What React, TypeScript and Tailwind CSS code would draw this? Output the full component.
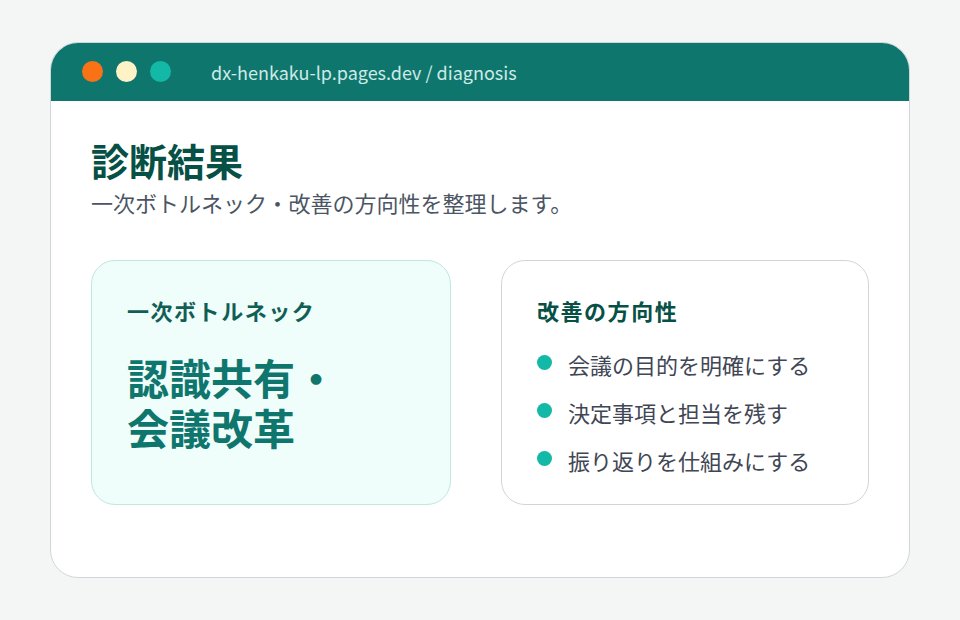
const font = { fontFamily: '"Noto Sans CJK JP", "Noto Sans", sans-serif' };

export default function App() {
  const items = ["会議の目的を明確にする", "決定事項と担当を残す", "振り返りを仕組みにする"];

  return (
    <div className="w-[960px] h-[620px] bg-[#f4f6f5] pt-[42px] px-[50px]" style={font}>
      <div className="h-[536px] rounded-[28px] border border-[#d1d5db] bg-white overflow-hidden">
        {/* ブラウザ風ヘッダー */}
        <div className="h-[59px] -mx-px -mt-px bg-[#0f766e] flex items-center pl-[32px]">
          <div className="flex items-center gap-[13px]">
            <span className="w-[21px] h-[21px] rounded-full bg-[#f97316]" />
            <span className="w-[21px] h-[21px] rounded-full bg-[#fef3c7]" />
            <span className="w-[21px] h-[21px] rounded-full bg-[#14b8a6]" />
          </div>
          <span className="ml-[40px] text-[18px] leading-[24px] text-[#cdeae5]">dx-henkaku-lp.pages.dev / diagnosis</span>
        </div>

        <div className="px-[40px] pt-[36px]">
          <h1 className="text-[38px] leading-[46px] font-bold text-[#065046]">診断結果</h1>
          <p className="mt-[4px] text-[22px] leading-[30px] text-[#4b5563]">一次ボトルネック・改善の方向性を整理します。</p>

          {/* 結果カード */}
          <div className="mt-[43px] grid grid-cols-[360px_1fr] gap-[50px]">
            <div className="h-[245px] rounded-[24px] border border-[#bde8e3] bg-[#effdfb] px-[35px] pt-[34px]">
              <div className="text-[22px] leading-[30px] font-bold tracking-[0.07em] text-[#115e55]">一次ボトルネック</div>
              <div className="mt-[27px] text-[42px] leading-[1.2] font-bold text-[#0f766e]">
                認識共有・
                <br />
                会議改革
              </div>
            </div>

            <div className="h-[245px] rounded-[24px] border border-[#d1d5db] bg-white px-[35px] pt-[34px]">
              <div className="text-[22px] leading-[30px] font-bold tracking-[0.07em] text-[#065046]">改善の方向性</div>
              <ul className="mt-[24px] flex flex-col gap-[18px]">
                {items.map((t) => (
                  <li key={t} className="flex items-start gap-[16px] text-[22px] leading-[30px] text-[#3f4654]">
                    <span className="mt-[6px] w-[15px] h-[15px] rounded-full bg-[#14b8a6] shrink-0" />
                    {t}
                  </li>
                ))}
              </ul>
            </div>
          </div>
        </div>
      </div>
    </div>
  );
}
